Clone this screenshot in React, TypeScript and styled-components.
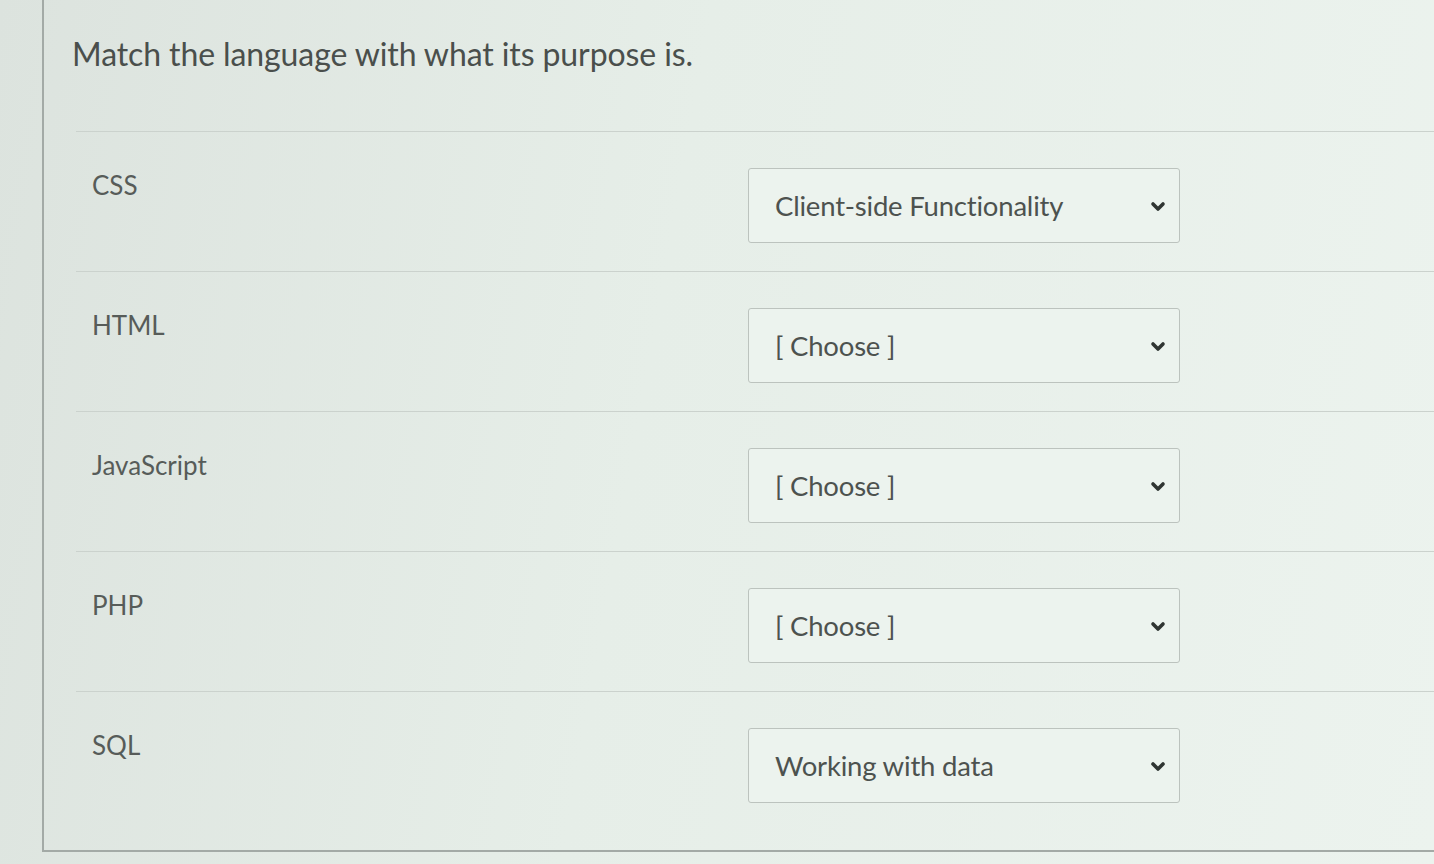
import React from 'react';
import styled, { createGlobalStyle } from 'styled-components';

const GlobalStyle = createGlobalStyle`
  html, body {
    margin: 0;
    padding: 0;
    height: 100%;
  }
  body {
    background: linear-gradient(100deg, #dce3de 0%, #e6eee8 45%, #ecf3ee 100%);
    font-family: Lato, 'Noto Sans', 'Liberation Sans', sans-serif;
    overflow: hidden;
  }
`;

const Page = styled.div`
  width: 1434px;
  height: 864px;
  box-sizing: border-box;
  padding-left: 42px;
`;

const Card = styled.div`
  height: 852px;
  box-sizing: border-box;
  border-left: 2px solid #a3aaa6;
  border-bottom: 2px solid #a3aaa6;
  padding: 34px 0 0 28px;
`;

const Question = styled.h1`
  margin: 0;
  font-size: 32px;
  font-weight: 400;
  line-height: 40px;
  color: #4a4f4c;
  letter-spacing: -0.1px;
`;

const Answers = styled.div`
  margin-top: 57px;
  margin-left: 4px;
`;

const Row = styled.div`
  height: 140px;
  box-sizing: border-box;
  border-top: 1.5px solid #cbd2cd;
  display: flex;
  align-items: flex-start;
`;

const Label = styled.div`
  width: 672px;
  padding: 36px 0 0 16px;
  box-sizing: border-box;
  font-size: 26px;
  line-height: 34px;
  color: #575c59;
`;

const Select = styled.div`
  margin-top: 36px;
  width: 432px;
  height: 75px;
  box-sizing: border-box;
  border: 1.5px solid #bcc3be;
  border-radius: 3px;
  background: #ecf3ee;
  display: flex;
  align-items: center;
  justify-content: space-between;
  padding: 0 12px 0 26px;
`;

const SelectText = styled.span`
  font-size: 27.5px;
  color: #4d524f;
  letter-spacing: -0.2px;
`;

const Chevron = () => (
  <svg width="18" height="14" viewBox="0 0 18 14">
    <polyline
      points="4,5 9,10 14,5"
      fill="none"
      stroke="#2f3532"
      strokeWidth="3.6"
      strokeLinecap="round"
      strokeLinejoin="round"
    />
  </svg>
);

const rows = [
  { label: 'CSS', value: 'Client-side Functionality' },
  { label: 'HTML', value: '' },
  { label: 'JavaScript', value: '' },
  { label: 'PHP', value: '' },
  { label: 'SQL', value: 'Working with data' },
];

export default function App() {
  return (
    <>
      <GlobalStyle />
      <Page>
        <Card>
          <Question>Match the language with what its purpose is.</Question>
          <Answers>
            {rows.map((r) => (
              <Row key={r.label}>
                <Label>{r.label}</Label>
                <Select>
                  <SelectText>{r.value || '[ Choose ]'}</SelectText>
                  <Chevron />
                </Select>
              </Row>
            ))}
          </Answers>
        </Card>
      </Page>
    </>
  );
}
